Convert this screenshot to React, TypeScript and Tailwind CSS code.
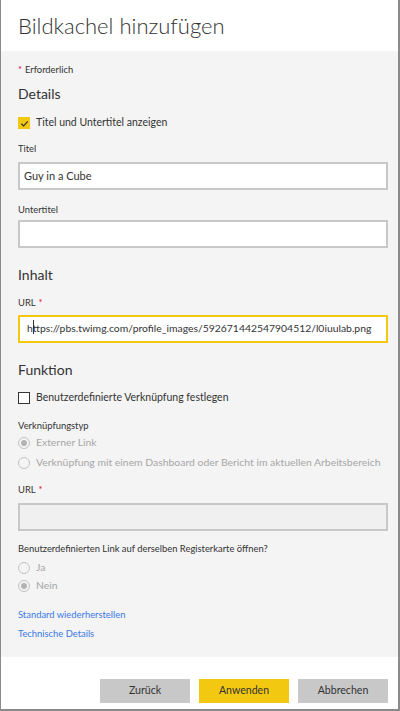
import React from "react";

const font = { fontFamily: 'Lato, "Open Sans", sans-serif' };

const Label = ({ children, required }: { children: React.ReactNode; required?: boolean }) => (
  <div className="flex h-[14px] items-center whitespace-nowrap text-[9.4px] text-[#333]">
    {children}
    {required && <span className="ml-[3px] text-[#e81123]">*</span>}
  </div>
);

const Radio = ({ label, checked }: { label: string; checked?: boolean }) => (
  <div className="flex h-[16px] items-center gap-[6px] whitespace-nowrap text-[10.4px] text-[#a6a6a6]">
    <span className="flex h-[12px] w-[12px] shrink-0 items-center justify-center rounded-full border border-[#c2c2c2]">
      {checked && <span className="h-[6px] w-[6px] rounded-full bg-[#b3b3b3]" />}
    </span>
    {label}
  </div>
);

const App = () => {
  return (
    <div
      className="flex h-[711px] w-[400px] flex-col border-b-2 border-l border-r-2 border-[#8a8a8a] bg-white"
      style={font}
    >
      {/* Kopf */}
      <div className="flex h-[51px] shrink-0 items-center pl-[17px]">
        <h1 className="text-[22px] font-light leading-none text-[#333]">Bildkachel hinzufügen</h1>
      </div>

      {/* Formular */}
      <div className="flex flex-1 flex-col bg-[#f4f4f4] pl-[17px] pr-[10px]">
        <div className="mt-[10px] flex h-[18px] items-center text-[9.4px] text-[#333]">
          <span className="mr-[3px] text-[#e8004d]">*</span>Erforderlich
        </div>
        <div className="mt-[3px] flex h-[22px] items-center text-[14px] text-[#333]">Details</div>
        <div className="mt-[11px] flex h-[16px] items-center gap-[6px] text-[10.5px] text-[#333]">
          <span className="flex h-[12px] w-[12px] items-center justify-center bg-[#f2c811]">
            <svg width="9" height="9" viewBox="0 0 10 10" fill="none">
              <path d="M1.5 5.2 L4 7.6 L8.6 2.6" stroke="#333" strokeWidth="1.4" />
            </svg>
          </span>
          Titel und Untertitel anzeigen
        </div>

        <div className="mt-[11px]">
          <Label>Titel</Label>
        </div>
        <div className="mt-[6px] flex h-[28px] items-center border-2 border-[#c8c8c8] bg-white pl-[4px] text-[11px] text-[#333]">
          Guy in a Cube
        </div>

        <div className="mt-[13px]">
          <Label>Untertitel</Label>
        </div>
        <div className="mt-[3px] h-[28px] border-2 border-[#c8c8c8] bg-white" />

        <div className="mt-[15px] flex h-[22px] items-center text-[14px] text-[#333]">Inhalt</div>
        <div className="mt-[11px]">
          <Label required>URL</Label>
        </div>
        <div className="mt-[5px] flex h-[28px] items-center whitespace-nowrap border-2 border-[#f2c811] bg-white pl-[7px] text-[10.4px] text-[#333]">
          <span className="relative">
            h
            <span className="absolute right-[-1px] top-[-1px] h-[14px] w-px bg-[#333]" />
          </span>
          <span>ttps://pbs.twimg.com/profile_images/592671442547904512/l0iuulab.png</span>
        </div>

        <div className="mt-[15px] flex h-[22px] items-center text-[14px] text-[#333]">Funktion</div>
        <div className="mt-[10px] flex h-[16px] items-center gap-[6px] text-[10.5px] text-[#333]">
          <span className="h-[12px] w-[12px] border border-[#333] bg-white" />
          Benutzerdefinierte Verknüpfung festlegen
        </div>

        <div className="mt-[13px]">
          <Label>Verknüpfungstyp</Label>
        </div>
        <div className="mt-[2px]">
          <Radio label="Externer Link" checked />
        </div>
        <div className="mt-[4px]">
          <Radio label="Verknüpfung mit einem Dashboard oder Bericht im aktuellen Arbeitsbereich" />
        </div>

        <div className="mt-[12px]">
          <Label required>URL</Label>
        </div>
        <div className="mt-[6px] h-[28px] border-2 border-[#c8c8c8] bg-[#f0f0f0]" />

        <div className="mt-[11px]">
          <Label>Benutzerdefinierten Link auf derselben Registerkarte öffnen?</Label>
        </div>
        <div className="mt-[4px]">
          <Radio label="Ja" />
        </div>
        <div className="mt-[2px]">
          <Radio label="Nein" checked />
        </div>

        <div className="mt-[14px] flex h-[14px] items-center text-[9.4px] text-[#3a78e6]">
          Standard wiederherstellen
        </div>
        <div className="mt-[5px] flex h-[14px] items-center text-[9.4px] text-[#3a78e6]">
          Technische Details
        </div>
      </div>

      {/* Fuss */}
      <div className="flex h-[52px] shrink-0 items-start justify-end gap-[9px] pr-[10px] pt-[22px]">
        <button className="h-[24px] w-[90px] bg-[#c8c8c8] text-[10.6px] text-[#333]">Zurück</button>
        <button className="h-[24px] w-[90px] bg-[#f2c811] text-[10.6px] text-[#333]">Anwenden</button>
        <button className="h-[24px] w-[90px] bg-[#c8c8c8] text-[10.6px] text-[#333]">Abbrechen</button>
      </div>
    </div>
  );
};

export default App;
